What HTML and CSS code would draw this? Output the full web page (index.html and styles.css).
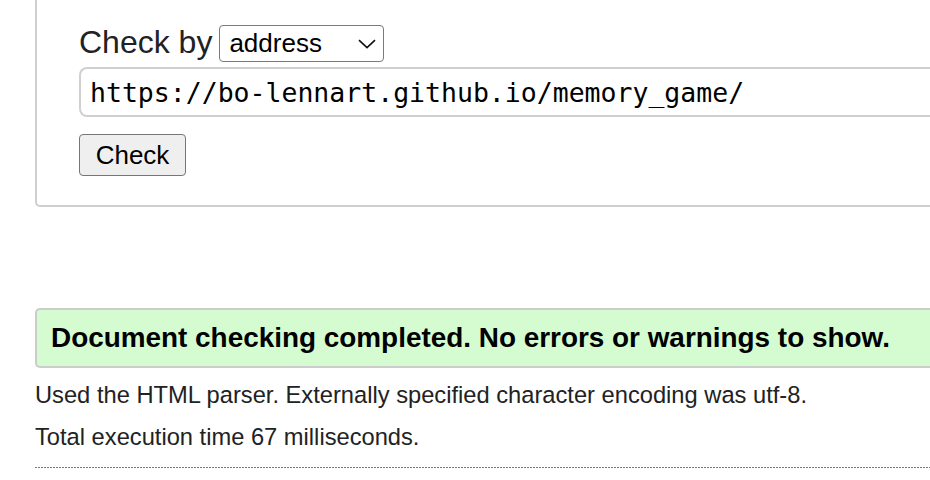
FILE: index.html
```html
<!DOCTYPE html>
<html lang="en">
<head>
<meta charset="utf-8">
<title>Validator result</title>
<link rel="stylesheet" href="styles.css">
</head>
<body>
<main class="page">
  <form class="checkbox-set">
    <div class="row">
      <label class="check-label" for="docselect">Check by</label>
      <span class="select-wrap">
        <select id="docselect" class="select">
          <option>address</option>
        </select>
        <svg class="chevron" width="18" height="10" viewBox="0 0 18 10" aria-hidden="true"><path d="M1 1.2 L9 8.6 L17 1.2" fill="none" stroke="#111" stroke-width="1.6"/></svg>
      </span>
    </div>
    <input class="url" type="text" value="https://bo-lennart.github.io/memory_game/">
    <button class="btn" type="button">Check</button>
  </form>

  <div class="success">Document checking completed. No errors or warnings to show.</div>
  <p class="info">Used the HTML parser. Externally specified character encoding was utf-8.</p>
  <p class="info">Total execution time 67 milliseconds.</p>
  <div class="dots"></div>
</main>
</body>
</html>
```

FILE: styles.css
```css
html {
  overflow: hidden;
}

body {
  margin: 0;
  background: #fff;
  color: #222;
  font-family: "Liberation Sans", Arial, Helvetica, sans-serif;
}

.page {
  padding-left: 35px;
}

.checkbox-set {
  border: 2px solid #cfcfcf;
  border-top: none;
  border-right: none;
  border-radius: 0 0 0 5px;
  padding: 25px 0 29px 42px;
  display: flex;
  flex-direction: column;
  align-items: stretch;
}

.row {
  display: flex;
  align-items: center;
  gap: 7px;
  height: 37px;
}

.check-label {
  font-size: 32px;
  line-height: 37px;
  color: #222;
  position: relative;
  top: -1px;
}

.select-wrap {
  position: relative;
  display: block;
  width: 165px;
  height: 37px;
}

.select {
  appearance: none;
  -webkit-appearance: none;
  box-sizing: border-box;
  width: 165px;
  height: 37px;
  margin: 0;
  padding: 0 0 0 9px;
  border: 1px solid #7a7a7a;
  border-radius: 4px;
  background: #fff;
  color: #000;
  font-family: "Liberation Sans", Arial, sans-serif;
  font-size: 26px;
  line-height: 35px;
}

.chevron {
  position: absolute;
  right: 8px;
  top: 14px;
  pointer-events: none;
}

.url {
  box-sizing: border-box;
  width: 100%;
  height: 50px;
  margin: 5px 0 0;
  padding: 0 0 0 9px;
  border: 2px solid #d0d0d0;
  border-right: none;
  border-radius: 8px 0 0 8px;
  background: #fff;
  color: #000;
  font-family: "DejaVu Sans Mono", "Liberation Mono", monospace;
  font-size: 26.5px;
  outline: none;
}

.btn {
  align-self: flex-start;
  box-sizing: border-box;
  width: 107px;
  height: 42px;
  margin-top: 17px;
  padding: 0;
  border: 1px solid #767676;
  border-radius: 4px;
  background: #efefef;
  color: #000;
  font-family: "Liberation Sans", Arial, sans-serif;
  font-size: 26px;
}

.success {
  margin-top: 101px;
  box-sizing: border-box;
  height: 60px;
  border: 2px solid #cccccc;
  border-right: none;
  border-radius: 5px 0 0 5px;
  background: #d5fcd1;
  padding-left: 14px;
  font-size: 27.9px;
  font-weight: bold;
  line-height: 56px;
  color: #000;
  white-space: nowrap;
}

.info {
  margin: 12px 0 0;
  font-size: 23.7px;
  line-height: 30px;
  color: #222;
  white-space: nowrap;
}

.dots {
  margin-top: 15px;
  height: 1px;
  background: repeating-linear-gradient(90deg, #777 0 2px, transparent 2px 3px);
}
```
